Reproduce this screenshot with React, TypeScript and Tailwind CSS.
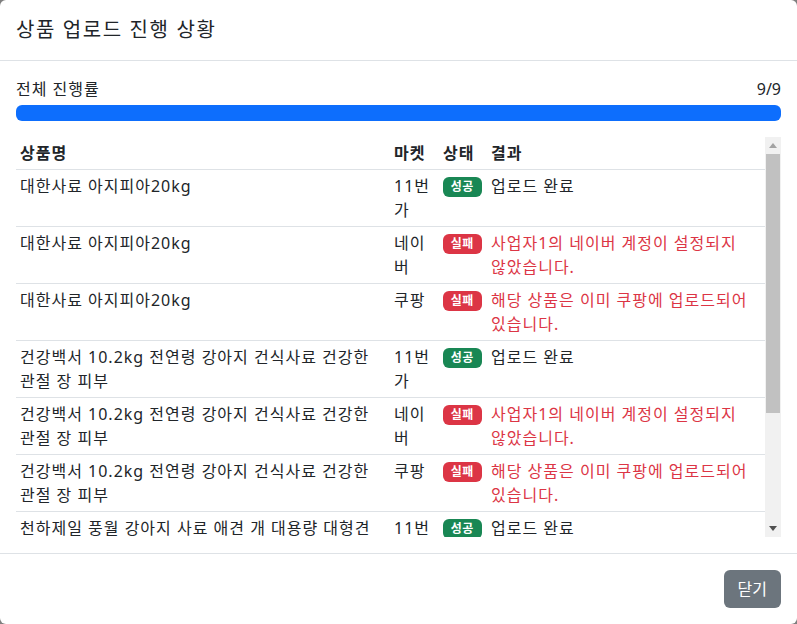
const rows = [
  { name: '대한사료 아지피아20kg', market: '11번가', ok: true, result: '업로드 완료' },
  { name: '대한사료 아지피아20kg', market: '네이버', ok: false, result: '사업자1의 네이버 계정이 설정되지 않았습니다.' },
  { name: '대한사료 아지피아20kg', market: '쿠팡', ok: false, result: '해당 상품은 이미 쿠팡에 업로드되어 있습니다.' },
  { name: '건강백서 10.2kg 전연령 강아지 건식사료 건강한 관절 장 피부', market: '11번가', ok: true, result: '업로드 완료' },
  { name: '건강백서 10.2kg 전연령 강아지 건식사료 건강한 관절 장 피부', market: '네이버', ok: false, result: '사업자1의 네이버 계정이 설정되지 않았습니다.' },
  { name: '건강백서 10.2kg 전연령 강아지 건식사료 건강한 관절 장 피부', market: '쿠팡', ok: false, result: '해당 상품은 이미 쿠팡에 업로드되어 있습니다.' },
  { name: '천하제일 풍월 강아지 사료 애견 개 대용량 대형견', market: '11번가', ok: true, result: '업로드 완료' },
  { name: '천하제일 풍월 강아지 사료 애견 개 대용량 대형견', market: '네이버', ok: false, result: '사업자1의 네이버 계정이 설정되지 않았습니다.' },
  { name: '천하제일 풍월 강아지 사료 애견 개 대용량 대형견', market: '쿠팡', ok: false, result: '해당 상품은 이미 쿠팡에 업로드되어 있습니다.' },
];

const font = { fontFamily: '"Noto Sans", "Noto Sans CJK KR", sans-serif' };

function StatusBadge({ ok }: { ok: boolean }) {
  return (
    <span
      className={`inline-block rounded-[6px] px-[7.8px] py-[4.2px] text-[12px] font-bold leading-none tracking-[0.5px] text-white align-[1px] ${
        ok ? 'bg-[#198754]' : 'bg-[#dc3545]'
      }`}
    >
      {ok ? '성공' : '실패'}
    </span>
  );
}

// the browser hides real scrollbars in screenshots, so draw the classic one
function FakeScrollbar() {
  return (
    <div className="flex w-4 shrink-0 flex-col bg-[#f1f1f1]">
      <div className="flex h-[17px] items-center justify-center">
        <svg width="8" height="5" viewBox="0 0 8 5">
          <path d="M0 5 L4 0 L8 5 Z" fill="#a3a3a3" />
        </svg>
      </div>
      <div className="mx-[1px] h-[259px] bg-[#c1c1c1]" />
      <div className="flex-1" />
      <div className="flex h-[17px] items-center justify-center">
        <svg width="8" height="5" viewBox="0 0 8 5">
          <path d="M0 0 L8 0 L4 5 Z" fill="#505050" />
        </svg>
      </div>
    </div>
  );
}

export default function App() {
  const done = rows.length;
  const total = rows.length;

  return (
    <div className="h-[624px] w-full bg-[#7f7f7f]" style={font}>
      <div className="flex h-full flex-col rounded-[6px] bg-white text-[16px] leading-6 tracking-[1px] text-[#212529]">
        {/* header */}
        <div className="flex h-[61px] shrink-0 items-center border-b border-[#dee2e6] px-4 pb-[1px]">
          <h5 className="text-[20px] font-normal leading-[30px] tracking-[1.6px]">상품 업로드 진행 상황</h5>
        </div>

        {/* body */}
        <div className="flex-1 p-4">
          <div className="mb-1 flex justify-between">
            <span>전체 진행률</span>
            <span className="tracking-normal">
              {done}/{total}
            </span>
          </div>
          <div className="mb-4 h-4 overflow-hidden rounded-[6px] bg-[#e9ecef]">
            <div className="h-full bg-[#0d6efd]" style={{ width: `${(done / total) * 100}%` }} />
          </div>

          <div className="flex h-[400px]">
            <div className="flex-1 overflow-hidden">
              <table className="w-full table-fixed border-collapse">
                <colgroup>
                  <col className="w-[374px]" />
                  <col className="w-[49px]" />
                  <col className="w-[48px]" />
                  <col />
                </colgroup>
                <thead>
                  <tr className="border-b border-[#dee2e6]">
                    <th className="p-1 text-left font-bold">상품명</th>
                    <th className="p-1 text-left font-bold">마켓</th>
                    <th className="p-1 text-left font-bold">상태</th>
                    <th className="p-1 text-left font-bold">결과</th>
                  </tr>
                </thead>
                <tbody>
                  {rows.map((r, i) => (
                    <tr key={i} className="border-b border-[#dee2e6] align-top">
                      <td className="break-keep p-1">{r.name}</td>
                      <td className="p-1">{r.market}</td>
                      <td className="p-1">
                        <StatusBadge ok={r.ok} />
                      </td>
                      <td className={`break-keep p-1 ${r.ok ? '' : 'text-[#dc3545]'}`}>{r.result}</td>
                    </tr>
                  ))}
                </tbody>
              </table>
            </div>
            <FakeScrollbar />
          </div>
        </div>

        {/* footer */}
        <div className="flex shrink-0 justify-end border-t border-[#dee2e6] p-3">
          <button className="m-1 h-[38px] rounded-[6px] bg-[#6c757d] px-[14px] tracking-normal text-white">닫기</button>
        </div>
      </div>
    </div>
  );
}
